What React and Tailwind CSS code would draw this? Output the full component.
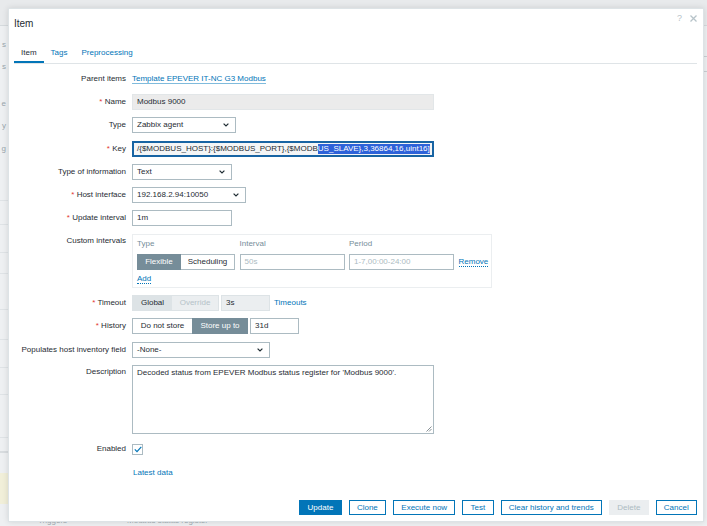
import React from "react";

function Chevron() {
  return (
    <svg width="6" height="4" viewBox="0 0 6 4" className="shrink-0">
      <path d="M0.6 0.6 L3 3 L5.4 0.6" fill="none" stroke="#1f2c33" strokeWidth="1.2" />
    </svg>
  );
}

function Select({ value, className }) {
  return (
    <div className={`flex h-[16px] items-center justify-between border border-[#acbbc2] bg-white pl-[4px] pr-[6px] ${className}`}>
      <span>{value}</span>
      <Chevron />
    </div>
  );
}

function Row({ label, required, top, children }) {
  return (
    <div className={`grid grid-cols-[112px_1fr] gap-x-[6px] ${top ? "items-start" : "items-center"}`}>
      <div className={`text-right ${top ? "pt-[2px]" : ""}`}>
        {required && <span className="text-[#e33734]">* </span>}
        {label}
      </div>
      <div className="flex items-center">{children}</div>
    </div>
  );
}

function Backdrop() {
  // page behind the modal, only the edges show
  return (
    <div className="flex h-full w-full flex-col">
      <div className="h-[31px] border-b border-[#d5dadd] bg-[#e8eaec]" />
      <div className="flex">
        <div className="flex w-[360px] flex-col">
          <div className="flex h-[140px] w-[6px] flex-col items-end pt-[14px] text-[8px] leading-[10px] text-[#9aa6ad]">
            <div className="h-[23px]">s</div>
            <div className="h-[37px]">s</div>
            <div className="h-[23px]">e</div>
            <div className="h-[23px]">y</div>
            <div className="h-[23px]">g</div>
          </div>
          <div className="h-[35px] border-b border-[#dfe3e6]" />
          <div className="h-[24px] border-b border-[#dfe3e6]" />
          <div className="h-[28px] border-b border-[#dfe3e6]" />
          <div className="h-[21px] border-b border-[#dfe3e6]" />
          <div className="h-[36px] border-b border-[#dfe3e6]" />
          <div className="h-[30px] border-b border-[#dfe3e6]" />
          <div className="h-[28px] border-b border-[#dfe3e6]" />
          <div className="h-[27px] border-b border-[#dfe3e6]" />
          <div className="h-[43px] border-b border-[#dfe3e6]" />
          <div className="h-[15px] border-b-2 border-[#d8dcdf]" />
          <div className="h-[20px]" />
          <div className="h-[31px] bg-[#f1efd9]" />
          <div className="flex gap-[60px] pl-[38px] pt-[12px] text-[8px] leading-[10px] text-[#a3adb2]">
            <span>Triggers</span>
            <span>Modbus status register</span>
          </div>
        </div>
        <div className="flex flex-1 flex-col">
          <div className="h-[31px] border-b border-[#c9cfd3]" />
          <div className="h-[15px] border-b border-[#c9cfd3]" />
        </div>
      </div>
    </div>
  );
}

function Button({ children, primary, disabled }) {
  let cls = "border-[#0275b8] bg-white text-[#0275b8]";
  if (primary) cls = "border-[#0275b8] bg-[#0275b8] text-white";
  if (disabled) cls = "border-[#ebeef0] bg-[#ebeef0] text-[#acbbc2]";
  return <button className={`flex h-[15px] items-center border px-[7.25px] leading-[10px] ${cls}`}>{children}</button>;
}

export default function App() {
  return (
    <div className="relative h-[526px] w-[707px] overflow-hidden bg-[#eef0f2] font-['Liberation_Sans',Arial,sans-serif] text-[8px] leading-[10px] text-[#1f2c33]">
      <Backdrop />

      <div className="absolute left-[8px] top-[8px] flex h-[514px] w-[696px] flex-col border border-[#dde3e6] bg-white pl-[5px] pr-[6px] shadow-[0_0_6px_rgba(0,0,0,0.12)]">
        {/* header */}
        <div className="flex h-[29px] items-center justify-between">
          <div className="text-[10px] leading-[12px]">Item</div>
          <div className="flex gap-[8px] self-start pt-[4px] text-[9px] text-[#b7c3c9]">
            <span>?</span>
            <svg width="7" height="7" viewBox="0 0 7 7" className="mt-[2px]">
              <path d="M0.5 0.5 L6.5 6.5 M6.5 0.5 L0.5 6.5" stroke="#b7c3c9" strokeWidth="1.3" />
            </svg>
          </div>
        </div>

        {/* tabs */}
        <div className="flex border-b border-[#dfe4e7]">
          <div className="border-b-2 border-[#0275b8] px-[7px] pb-[3px] pt-[10px]">Item</div>
          <div className="border-b-2 border-transparent px-[7px] pb-[3px] pt-[10px] text-[#0275b8]">Tags</div>
          <div className="border-b-2 border-transparent px-[7px] pb-[3px] pt-[10px] text-[#0275b8]">Preprocessing</div>
        </div>

        {/* form */}
        <div className="flex flex-col gap-[7.3px] pt-[6.7px]">
          <Row label="Parent items">
            <div className="flex h-[16px] items-center">
              <span className="border-b border-[#80bbdc] leading-[9px] text-[#0275b8]">Template EPEVER IT-NC G3 Modbus</span>
            </div>
          </Row>
          <Row label="Name" required>
            <div className="flex h-[16px] w-[302px] items-center border border-[#e2e6e8] bg-[#ebebeb] px-[4px]">Modbus 9000</div>
          </Row>
          <Row label="Type">
            <Select value="Zabbix agent" className="w-[104px]" />
          </Row>
          <Row label="Key" required>
            <div className="flex h-[16px] w-[302px] items-center overflow-hidden whitespace-nowrap border-2 border-[#1864a3] bg-[#f4f5f6] px-[3px]">
              <span>/{"{$MODBUS_HOST}:{$MODBUS_PORT},{$MODB"}</span>
              <span className="bg-[#2e62d9] text-white">{"US_SLAVE},3,36864,16,uint16]"}</span>
              <span className="ml-[1px] h-[10px] w-px bg-[#1f2c33]" />
            </div>
          </Row>
          <Row label="Type of information">
            <Select value="Text" className="w-[100px]" />
          </Row>
          <Row label="Host interface" required>
            <Select value="192.168.2.94:10050" className="w-[114px]" />
          </Row>
          <Row label="Update interval" required>
            <div className="flex h-[16px] w-[100px] items-center border border-[#acbbc2] px-[4px]">1m</div>
          </Row>
          <Row label="Custom intervals" top>
            <div className="flex h-[54px] w-[360px] flex-col border border-[#ebeef0] px-[4px] pt-[4px]">
              <div className="grid grid-cols-[98px_105px_105px_auto] gap-x-[4.5px] text-[#768d99]">
                <span>Type</span>
                <span>Interval</span>
                <span>Period</span>
                <span />
              </div>
              <div className="mt-[5px] grid grid-cols-[98px_105px_105px_auto] items-center gap-x-[4.5px]">
                <div className="flex h-[16px]">
                  <div className="flex w-[44px] items-center justify-center bg-[#768d99] text-white">Flexible</div>
                  <div className="flex flex-1 items-center justify-center border border-l-0 border-[#acbbc2]">Scheduling</div>
                </div>
                <div className="flex h-[16px] items-center border border-[#acbbc2] px-[4px] text-[#acbbc2]">50s</div>
                <div className="flex h-[16px] items-center border border-[#acbbc2] px-[4px] text-[#acbbc2]">1-7,00:00-24:00</div>
                <span className="justify-self-start border-b border-dotted border-[#0275b8] leading-[9px] text-[#0275b8]">Remove</span>
              </div>
              <div className="mt-[4px]">
                <span className="border-b border-dotted border-[#0275b8] leading-[9px] text-[#0275b8]">Add</span>
              </div>
            </div>
          </Row>
          <Row label="Timeout" required>
            <div className="flex h-[16px] border border-[#dde3e6]">
              <div className="flex w-[39px] items-center justify-center bg-[#dde3e6]">Global</div>
              <div className="flex w-[46px] items-center justify-center bg-[#ebeef0] text-[#b5c2c8]">Override</div>
            </div>
            <div className="ml-[2px] flex h-[16px] w-[49px] items-center border border-[#dde3e6] bg-[#ebeef0] px-[4px]">3s</div>
            <span className="ml-[4px] text-[#0275b8]">Timeouts</span>
          </Row>
          <Row label="History" required>
            <div className="flex h-[16px]">
              <div className="flex w-[60px] items-center justify-center border border-r-0 border-[#acbbc2]">Do not store</div>
              <div className="flex w-[56px] items-center justify-center bg-[#768d99] text-white">Store up to</div>
            </div>
            <div className="ml-[2px] flex h-[16px] w-[49px] items-center border border-[#acbbc2] px-[4px]">31d</div>
          </Row>
          <Row label="Populates host inventory field">
            <Select value="-None-" className="w-[138px]" />
          </Row>
          <Row label="Description" top>
            <div className="relative h-[69px] w-[302px] border border-[#acbbc2] px-[4px] pt-[2px]">
              Decoded status from EPEVER Modbus status register for 'Modbus 9000'.
              <svg width="6" height="6" viewBox="0 0 6 6" className="absolute bottom-[1px] right-[1px]">
                <path d="M5.5 0.5 L0.5 5.5 M5.5 3 L3 5.5" stroke="#6b767c" strokeWidth="0.8" />
              </svg>
            </div>
          </Row>
          <Row label="Enabled">
            <div className="flex h-[16px] items-center">
              <div className="flex h-[11px] w-[11px] items-center justify-center border border-[#acbbc2]">
                <svg width="8" height="7" viewBox="0 0 8 7">
                  <path d="M0.8 3.4 L3 5.6 L7.3 0.8" fill="none" stroke="#0275b8" strokeWidth="1.2" />
                </svg>
              </div>
            </div>
          </Row>
          <Row label="">
            <div className="flex h-[16px] items-center pl-px text-[#0275b8]">Latest data</div>
          </Row>
        </div>

        {/* footer */}
        <div className="mt-auto flex justify-end gap-[7px] pb-[6px]">
          <Button primary>Update</Button>
          <Button>Clone</Button>
          <Button>Execute now</Button>
          <Button>Test</Button>
          <Button>Clear history and trends</Button>
          <Button disabled>Delete</Button>
          <Button>Cancel</Button>
        </div>
      </div>
    </div>
  );
}
